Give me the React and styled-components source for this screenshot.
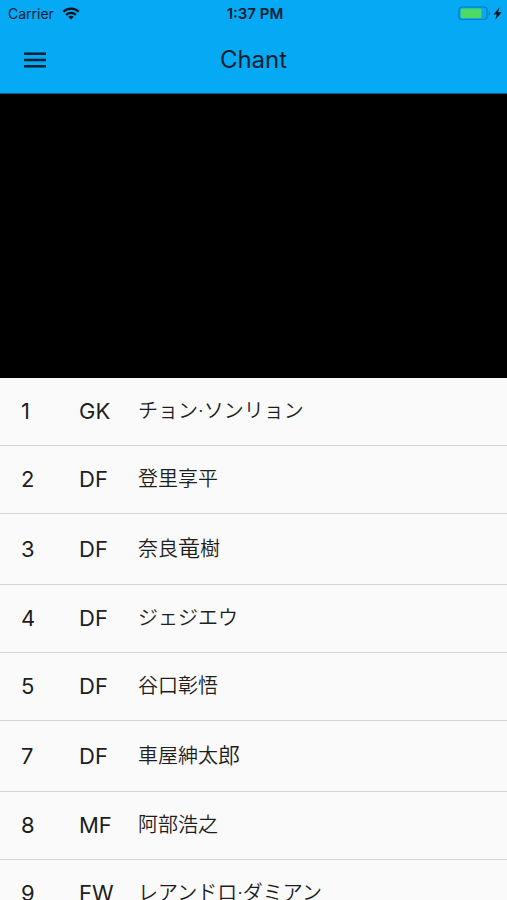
import React from "react";
import styled, { createGlobalStyle } from "styled-components";

const GlobalStyle = createGlobalStyle`
  * { box-sizing: border-box; }
  body {
    margin: 0;
    background: #fafafa;
    color: #1e1e1e;
    font-family: Inter, "Noto Sans CJK JP", sans-serif;
  }
`;

const Screen = styled.div`
  display: flex;
  flex-direction: column;
  height: 100vh;
  overflow: hidden;
`;

const Header = styled.header`
  flex: none;
  background: #05a9f4;
  color: #05202f;
  border-bottom: 1px solid #035e88;
`;

const StatusBar = styled.div`
  display: grid;
  grid-template-columns: 1fr auto 1fr;
  align-items: center;
  height: 27px;
  padding: 0 5px 0 8px;
  font-size: 14px;
  line-height: 20px;
`;

const Carrier = styled.div`
  display: flex;
  align-items: center;
  gap: 8px;
`;

const Clock = styled.time`
  font-size: 15px;
  font-weight: 600;
`;

const Power = styled.div`
  display: flex;
  align-items: center;
  justify-content: flex-end;
  gap: 2px;
`;

const AppBar = styled.div`
  display: grid;
  grid-template-columns: 1fr auto 1fr;
  align-items: center;
  height: 66px;
  padding: 0 16px;
`;

const MenuButton = styled.button`
  display: flex;
  justify-self: start;
  padding: 8px;
  border: 0;
  background: none;
  color: inherit;
  cursor: pointer;
`;

const Title = styled.h1`
  margin: 0;
  font-size: 24px;
  font-weight: 400;
  line-height: 32px;
`;

const Player = styled.section`
  flex: none;
  height: 56vw;
  background: #000;
`;

const PlayerList = styled.ul`
  flex: 1;
  min-height: 0;
  margin: 0;
  padding: 0;
  list-style: none;
  overflow-y: auto;
  scrollbar-width: none;
`;

const Row = styled.li`
  display: grid;
  grid-template-columns: 58px 59px 1fr;
  align-items: center;
  height: ${({ $tall }) => ($tall ? 71 : 68)}px;
  padding: 0 21px;
  border-bottom: 1px solid #d4d4d4;
  font-size: 22px;
  line-height: 28px;
`;

const Name = styled.span`
  font-size: 20px;
  font-weight: 350;
`;

const LargeGlyphs = styled.span`
  font-size: 22px;
`;

const players = [
  { number: 1, position: "GK", name: "チョン·ソンリョン" },
  { number: 2, position: "DF", name: "登里享平" },
  { number: 3, position: "DF", name: "奈良", large: "竜", rest: "樹" },
  { number: 4, position: "DF", name: "ジェジエウ" },
  { number: 5, position: "DF", name: "谷口彰悟" },
  { number: 7, position: "DF", name: "車屋紳太", large: "郎" },
  { number: 8, position: "MF", name: "阿部浩之" },
  { number: 9, position: "FW", name: "レアンドロ·ダミアン" },
];

const WifiIcon = () => (
  <svg width="18" height="13" viewBox="0 0 18 13" fill="none" stroke="#04131c" strokeWidth="2.3" aria-label="Wi-Fi">
    <path d="M1.3 4.8C5.5.6 12.5.6 16.7 4.8" />
    <path d="M4.1 7.8c2.7-2.6 7.1-2.6 9.8 0" />
    <path d="M9 12.6 6.2 9.8c1.6-1.4 4-1.4 5.6 0z" fill="#04131c" stroke="none" />
  </svg>
);

const BatteryIcon = () => (
  <svg width="33" height="15" viewBox="0 0 33 15" aria-label="Battery charging">
    <rect x="1" y="1" width="28" height="12.5" rx="3" fill="none" stroke="#057cb5" strokeWidth="1.2" />
    <rect x="2.6" y="2.6" width="20.8" height="9.4" rx="1.2" fill="#4cd964" />
    <path d="M30.7 5v4.6c2-.8 2-3.8 0-4.6z" fill="#057cb5" />
  </svg>
);

const BoltIcon = () => (
  <svg width="9" height="13" viewBox="0 0 8 12" fill="#04131c" aria-hidden="true">
    <path d="M5.9.3.3 6.9h3L1.9 11.7l5.9-6.8H4.6z" />
  </svg>
);

const MenuIcon = () => (
  <svg width="22" height="16" viewBox="0 0 22 16" stroke="currentColor" strokeWidth="2.4" aria-hidden="true">
    <path d="M0 1.8h22M0 8h22M0 14.2h22" />
  </svg>
);

export default function App() {
  return (
    <Screen>
      <GlobalStyle />
      <Header>
        <StatusBar>
          <Carrier>
            Carrier
            <WifiIcon />
          </Carrier>
          <Clock dateTime="13:37">1:37 PM</Clock>
          <Power>
            <BatteryIcon />
            <BoltIcon />
          </Power>
        </StatusBar>
        <AppBar>
          <MenuButton type="button" aria-label="Open menu">
            <MenuIcon />
          </MenuButton>
          <Title>Chant</Title>
        </AppBar>
      </Header>
      <Player aria-label="Video player" />
      <PlayerList>
        {players.map(({ number, position, name, large, rest }) => (
          <Row key={number} $tall={Boolean(large)}>
            <span>{number}</span>
            <span>{position}</span>
            <Name lang="ja">
              {name}
              {large && <LargeGlyphs>{large}</LargeGlyphs>}
              {rest}
            </Name>
          </Row>
        ))}
      </PlayerList>
    </Screen>
  );
}
